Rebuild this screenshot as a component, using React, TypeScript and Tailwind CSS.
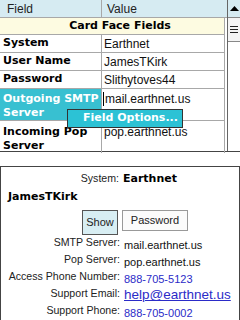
import React from 'react'

const bold = "font-['DejaVu_Sans',sans-serif] font-bold text-[11px]"
const reg = "font-['Liberation_Sans',sans-serif] text-[12px]"

function Row({ label, value, h }: { label: string; value: string; h: string }) {
  return (
    <div className={`flex border-b border-[#a8a8a8] ${h}`}>
      <div className={`w-[102px] border-r border-[#a8a8a8] pl-[3px] flex items-center text-black ${bold}`}>{label}</div>
      <div className={`flex-1 pl-[2px] flex items-center text-[#111] ${reg}`}>{value}</div>
    </div>
  )
}

function Info({ label, children }: { label: string; children: React.ReactNode }) {
  return (
    <div className="flex h-[17px] items-center">
      <div className="w-[119px] text-right text-[#222] text-[10.6px] font-['Liberation_Sans',sans-serif]">{label}</div>
      <div className="pl-[4px] flex-1">{children}</div>
    </div>
  )
}

export default function App() {
  return (
    <main className="w-[240px] h-[320px] bg-white overflow-hidden relative">
      {/* field list */}
      <section className="relative flex border-b border-[#444] h-[152px]">
        <div className="w-[227px] flex flex-col">
          <div className={`flex h-[18px] bg-[#d6ebf2] border-b border-[#a8a8a8] text-[#222] ${reg}`}>
            <div className="w-[102px] border-r border-[#a8a8a8] pl-[7px] flex items-center">Field</div>
            <div className="flex-1 pl-[5px] flex items-center">Value</div>
          </div>
          <div className="w-[225px] border-r border-[#a8a8a8] flex-1 flex flex-col">
            <div className={`h-[17px] bg-[#fdfbe1] border-b border-[#a8a8a8] flex items-center justify-center pl-[16px] text-black ${bold}`}>
              Card Face Fields
            </div>
            <Row label="System" value="Earthnet" h="h-[18px]" />
            <Row label="User Name" value="JamesTKirk" h="h-[18px]" />
            <Row label="Password" value="Slithytoves44" h="h-[18px]" />
            <div className="flex border-b border-[#a8a8a8] h-[32px]">
              <div className={`w-[102px] border-r border-[#a8a8a8] bg-[#38c0d1] pl-[3px] pt-[3px] leading-[14px] text-white ${bold}`}>
                Outgoing SMTP<br />Server
              </div>
              <div className={`flex-1 pl-[1px] pt-[2px] flex items-start text-[#111] ${reg}`}>
                <span className="w-px h-[14px] bg-black mt-[1px] mr-[1px]" />
                <span className="leading-[16px]">mail.earthnet.us</span>
              </div>
            </div>
            <div className="flex flex-1">
              <div className={`w-[102px] border-r border-[#a8a8a8] pl-[3px] pt-[4px] leading-[14px] text-black ${bold}`}>
                Incoming Pop<br />Server
              </div>
              <div className={`flex-1 pl-[2px] pt-[3px] leading-[16px] text-[#111] ${reg}`}>pop.earthnet.us</div>
            </div>
          </div>
        </div>
        {/* scrollbar */}
        <div className="w-[13px] border-l border-[#666] flex flex-col">
          <div className="h-[18px] bg-[#d6ebf2] border-b border-[#888] flex items-center justify-center">
            <svg width="9" height="5" viewBox="0 0 9 5"><path d="M0 5 L4.5 0 L9 5 Z" fill="#000" /></svg>
          </div>
          <div className="h-[24px] border-b border-[#888] bg-[#f4f4f4] flex items-center justify-center">
            <svg width="8" height="7" viewBox="0 0 8 7"><path d="M0 0.5h8M0 3.5h8M0 6.5h8" stroke="#222" strokeWidth="1" /></svg>
          </div>
          <div className="flex-1 bg-white" />
        </div>
        {/* context menu */}
        <div className={`absolute left-[67px] top-[109px] w-[116px] h-[19px] bg-[#2cc2d5] border border-[#333] pl-[15px] flex items-center text-white ${bold}`}>
          Field Options...
        </div>
      </section>

      {/* card preview */}
      <section className="mt-[14px] h-[160px] border border-[#444] border-b-0">
        <div className="flex h-[22px] items-center mt-[1px]">
          <div className="w-[118px] text-right text-[#222] text-[10.6px] font-['Liberation_Sans',sans-serif]">System:</div>
          <div className={`pl-[4px] text-black ${bold}`}>Earthnet</div>
        </div>
        <div className={`h-[15px] pl-[7px] flex items-center text-black ${bold}`}>JamesTKirk</div>
        <div className="flex gap-[4px] pl-[81px] mt-[5px] items-start h-[24px]">
          <button className="w-[36px] h-[25px] bg-[#d8eef3] border border-[#555] text-[11px] text-[#222] font-['Liberation_Sans',sans-serif]">Show</button>
          <button className="w-[66px] h-[21px] bg-[#fbfbfb] border border-[#999] text-[11px] text-[#222] font-['Liberation_Sans',sans-serif]">Password</button>
        </div>
        <Info label="SMTP Server:"><span className="text-[11px] text-[#111] font-['Liberation_Sans',sans-serif]">mail.earthnet.us</span></Info>
        <Info label="Pop Server:"><span className="text-[11px] text-[#111] font-['Liberation_Sans',sans-serif]">pop.earthnet.us</span></Info>
        <Info label="Access Phone Number:"><span className="text-[11px] text-[#2b2bc8] font-['Liberation_Sans',sans-serif]">888-705-5123</span></Info>
        <Info label="Support Email:"><span className="text-[13.5px] text-[#2b2bc8] underline font-['Liberation_Sans',sans-serif]">help@earthnet.us</span></Info>
        <Info label="Support Phone:"><span className="text-[11px] text-[#2b2bc8] font-['Liberation_Sans',sans-serif]">888-705-0002</span></Info>
      </section>
    </main>
  )
}
